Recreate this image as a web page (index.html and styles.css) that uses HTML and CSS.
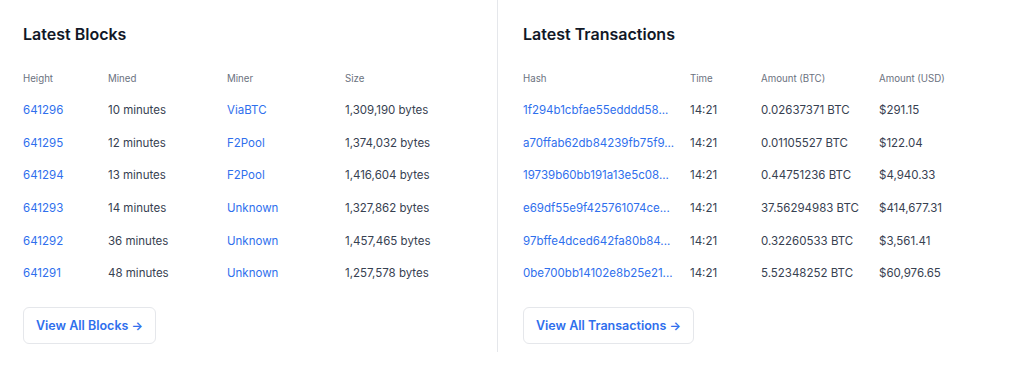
FILE: index.html
```html
<!DOCTYPE html>
<html lang="en">
<head>
    <meta charset="UTF-8">
    <meta name="viewport" content="width=device-width, initial-scale=1.0">
    <title>Explorer - Latest</title>
    <link rel="stylesheet" href="styles.css">
</head>
<body>
    <div class="container">
        <section class="panel panel-blocks">
            <h2>Latest Blocks</h2>
            <table class="data-table">
                <thead>
                    <tr>
                        <th class="col-height">Height</th>
                        <th class="col-mined">Mined</th>
                        <th class="col-miner">Miner</th>
                        <th>Size</th>
                    </tr>
                </thead>
                <tbody>
                    <tr><td><a href="#">641296</a></td><td>10 minutes</td><td><a href="#">ViaBTC</a></td><td>1,309,190 bytes</td></tr>
                    <tr><td><a href="#">641295</a></td><td>12 minutes</td><td><a href="#">F2Pool</a></td><td>1,374,032 bytes</td></tr>
                    <tr><td><a href="#">641294</a></td><td>13 minutes</td><td><a href="#">F2Pool</a></td><td>1,416,604 bytes</td></tr>
                    <tr><td><a href="#">641293</a></td><td>14 minutes</td><td><a href="#">Unknown</a></td><td>1,327,862 bytes</td></tr>
                    <tr><td><a href="#">641292</a></td><td>36 minutes</td><td><a href="#">Unknown</a></td><td>1,457,465 bytes</td></tr>
                    <tr><td><a href="#">641291</a></td><td>48 minutes</td><td><a href="#">Unknown</a></td><td>1,257,578 bytes</td></tr>
                </tbody>
            </table>
            <a class="view-all" href="#">View All Blocks <span class="arrow">&rarr;</span></a>
        </section>

        <section class="panel panel-txs">
            <h2>Latest Transactions</h2>
            <table class="data-table">
                <thead>
                    <tr>
                        <th class="col-hash">Hash</th>
                        <th class="col-time">Time</th>
                        <th class="col-btc">Amount (BTC)</th>
                        <th>Amount (USD)</th>
                    </tr>
                </thead>
                <tbody>
                    <tr><td><a href="#">1f294b1cbfae55edddd58...</a></td><td>14:21</td><td>0.02637371 BTC</td><td>$291.15</td></tr>
                    <tr><td><a href="#">a70ffab62db84239fb75f9...</a></td><td>14:21</td><td>0.01105527 BTC</td><td>$122.04</td></tr>
                    <tr><td><a href="#">19739b60bb191a13e5c08...</a></td><td>14:21</td><td>0.44751236 BTC</td><td>$4,940.33</td></tr>
                    <tr><td><a href="#">e69df55e9f425761074ce...</a></td><td>14:21</td><td>37.56294983 BTC</td><td>$414,677.31</td></tr>
                    <tr><td><a href="#">97bffe4dced642fa80b84...</a></td><td>14:21</td><td>0.32260533 BTC</td><td>$3,561.41</td></tr>
                    <tr><td><a href="#">0be700bb14102e8b25e21...</a></td><td>14:21</td><td>5.52348252 BTC</td><td>$60,976.65</td></tr>
                </tbody>
            </table>
            <a class="view-all" href="#">View All Transactions <span class="arrow">&rarr;</span></a>
        </section>
    </div>
</body>
</html>
```

FILE: styles.css
```css
:root {
    --link-color: #2f6fed;
    --text-dark: #111827;
    --text-body: #374151;
    --text-muted: #6b7280;
    --border-color: #e5e7eb;
}

body {
    font-family: 'Inter', 'Noto Sans', sans-serif;
    margin: 0;
    padding: 0;
    background-color: #fff;
    color: var(--text-body);
}

.container {
    display: flex;
}

.panel {
    padding: 22px 0 8px 23px;
}

.panel-blocks {
    width: 474px;
    border-right: 1px solid var(--border-color);
}

.panel-txs {
    flex: 1;
    padding-left: 25px;
}

h2 {
    margin: 0 0 16px;
    font-size: 16px;
    line-height: 24px;
    font-weight: 600;
    color: var(--text-dark);
}

.data-table {
    border-collapse: collapse;
    font-size: 11.5px;
}

.data-table th,
.data-table td {
    padding: 0;
    height: 32.6px;
    text-align: left;
    vertical-align: middle;
    white-space: nowrap;
}

.data-table th {
    height: 32px;
    font-size: 9.7px;
    font-weight: 400;
    color: var(--text-muted);
}

.data-table a {
    color: var(--link-color);
    text-decoration: none;
}

.col-height { width: 85px; }
.col-mined { width: 119px; }
.col-miner { width: 118px; }

.col-hash { width: 167px; }
.col-time { width: 71px; }
.col-btc { width: 118px; }

.view-all {
    display: inline-block;
    margin-top: 17px;
    padding: 0 12px;
    height: 35px;
    line-height: 35px;
    border: 1px solid var(--border-color);
    border-radius: 6px;
    font-size: 12.5px;
    font-weight: 600;
    color: var(--link-color);
    text-decoration: none;
}

.arrow {
    font-size: 12px;
}
```
